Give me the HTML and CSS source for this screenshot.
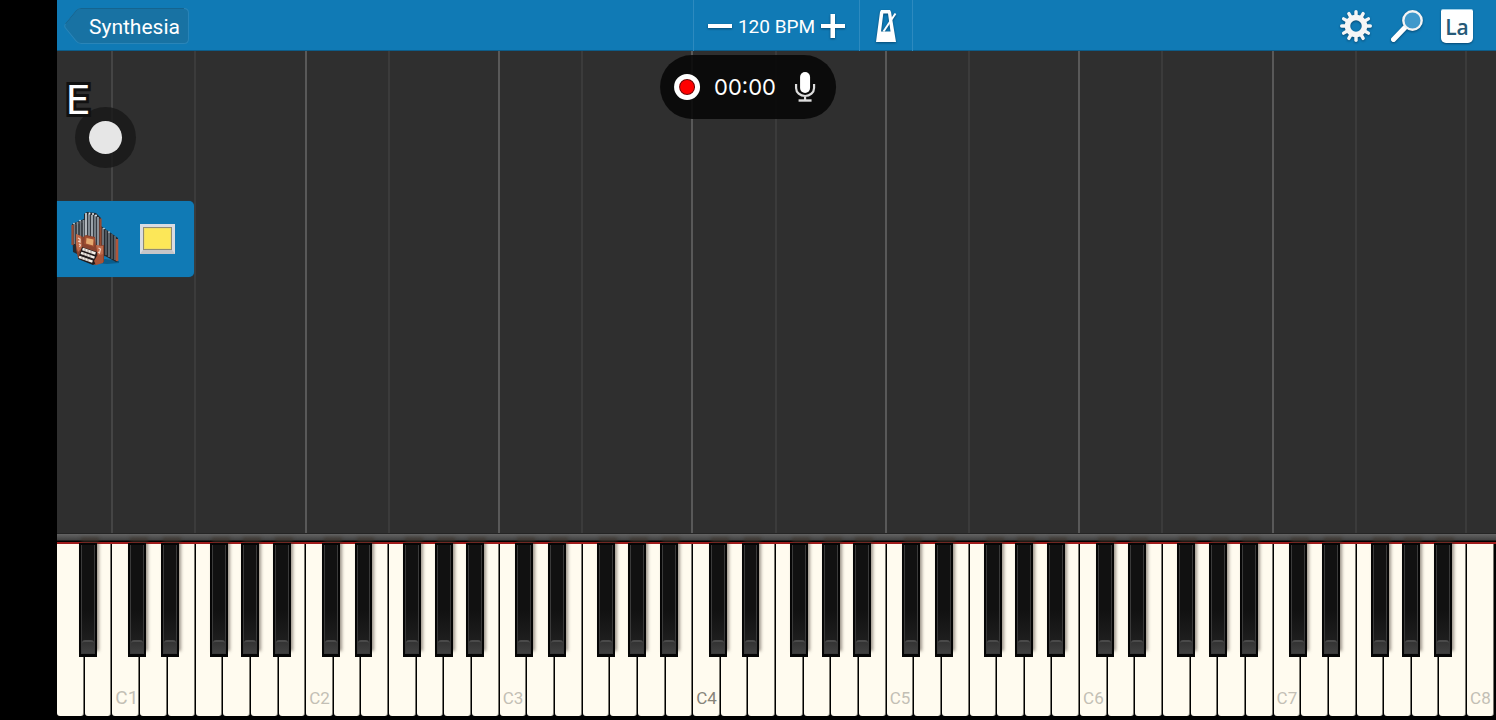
FILE: index.html
```html
<!DOCTYPE html>
<html lang="en">
<head>
<meta charset="utf-8">
<title>Synthesia</title>
<link rel="stylesheet" href="styles.css">
</head>
<body>
<main class="app">
  <header class="topbar">
    <div class="topbar-left">
      <button class="back" type="button">
        <svg class="back-shape" viewBox="0 0 124 36" preserveAspectRatio="none" aria-hidden="true">
          <path d="M17 .5H119Q123.500 .5 123.500 5V31Q123.500 35.500 119 35.500H17Q14 35.500 12 33L1.500 20Q0 18 1.500 16L12 3Q14 .5 17 .5Z" fill="#1872a3" stroke="#2a85b8"/>
          <path d="M1.500 16L12 3Q14 .5 17 .5H119" fill="none" stroke="#15648f"/>
        </svg>
        <span class="back-label">Synthesia</span>
      </button>
    </div>
    <div class="tempo">
      <button class="icon-btn" type="button" aria-label="Slower">
        <svg class="glyph" width="24" height="26" viewBox="0 0 24 26"><path d="M0 11h24v4H0z" fill="#fff"/></svg>
      </button>
      <output class="bpm">120 BPM</output>
      <button class="icon-btn" type="button" aria-label="Faster">
        <svg class="glyph" width="24" height="26" viewBox="0 0 24 26"><path d="M9.500 1h4.500v10H24v4H14v10H9.500V15H0v-4h9.500z" fill="#fff"/></svg>
      </button>
    </div>
    <div class="topbar-right">
      <button class="icon-btn metronome" type="button" aria-label="Metronome">
        <svg class="glyph" width="24" height="34" viewBox="0 0 24 34">
          <path fill="#fff" fill-rule="evenodd" d="M7 1h9l1 2 5 30H2L6 3zM9.300 4.500L7 22.500h9.500L14 4.500z"/>
          <path d="M9.500 22.500L21.500 4.500" stroke="#fff" stroke-width="2"/>
        </svg>
      </button>
      <div class="tools">
        <button class="icon-btn" type="button" aria-label="Settings">
          <svg class="glyph" width="34" height="34" viewBox="-17 -17 34 34">
            <circle r="8.500" fill="none" stroke="#f6f6f6" stroke-width="5.500"/>
            <g stroke="#f6f6f6" stroke-width="3.400" stroke-linecap="round">
              <path id="tooth" d="M0-10V-14.300"/>
              <use href="#tooth" transform="rotate(30)"/><use href="#tooth" transform="rotate(60)"/><use href="#tooth" transform="rotate(90)"/>
              <use href="#tooth" transform="rotate(120)"/><use href="#tooth" transform="rotate(150)"/><use href="#tooth" transform="rotate(180)"/>
              <use href="#tooth" transform="rotate(210)"/><use href="#tooth" transform="rotate(240)"/><use href="#tooth" transform="rotate(270)"/>
              <use href="#tooth" transform="rotate(300)"/><use href="#tooth" transform="rotate(330)"/>
            </g>
          </svg>
        </button>
        <button class="icon-btn" type="button" aria-label="Zoom">
          <svg class="glyph" width="34" height="34" viewBox="0 0 34 34">
            <path d="M3.500 30.500L15 18.500" stroke="#fff" stroke-width="5" stroke-linecap="round"/>
            <circle cx="22.500" cy="11.500" r="9.200" fill="#3f98cb" stroke="#f4f4f4" stroke-width="2.400"/>
          </svg>
        </button>
        <button class="labels-btn" type="button">La</button>
      </div>
    </div>
  </header>

  <section class="roll" aria-label="Note roll">
    <div class="lanes" id="lanes"></div>
    <div class="pedal"><span class="pedal-dot"></span></div>
    <div class="note-name">E</div>
    <div class="track">
      <button class="icon-btn" type="button" aria-label="Church organ">
        <svg width="60" height="68" viewBox="0 0 60 68">
          <path d="M30 58l10-4 14 2v2l-12 1z" fill="#0b5c8b"/>
          <path d="M7 19l12-5V9l3-2 9 1 5 5v8l17 12v23l-2 1-11-6-16 4-16-8z" fill="#252a30"/>
          <g stroke-width="1.800">
            <path d="M9.500 19v20" stroke="#737b82"/><path d="M12.500 17v20" stroke="#868e94"/><path d="M15.500 16v25" stroke="#737b82"/><path d="M18.500 15v25" stroke="#8b9298"/>
            <path d="M21 10v25" stroke="#c1c7cc"/><path d="M24 9v25" stroke="#8e969d"/><path d="M27 10v26" stroke="#a9b1b8"/><path d="M30 10v30" stroke="#7f888f"/><path d="M33 12v30" stroke="#969da5"/>
            <path d="M38 23v24" stroke="#737980"/><path d="M41 25v25" stroke="#565c63"/><path d="M44 27v25" stroke="#6a7077"/><path d="M47 29v25" stroke="#50565c"/><path d="M50 31v24" stroke="#60666d"/>
          </g>
          <path d="M22.500 10v23M25.500 9v24M28.500 9v28M31.500 10v31M11 20v20M14 19v20M17 18v20" stroke="#343a41"/>
          <g fill="#e4e7e9"><circle cx="21" cy="9" r="1"/><circle cx="24.500" cy="8.500" r="1"/><circle cx="28" cy="9" r="1"/><circle cx="31" cy="10.500" r="1"/><circle cx="9" cy="18.500" r=".8"/><circle cx="15" cy="15.500" r=".8"/><circle cx="39" cy="23.500" r=".8"/><circle cx="44" cy="27" r=".8"/></g>
          <path d="M7.500 20v20M35.500 13.500v27" stroke="#984b31" stroke-width="2.200"/>
          <path d="M52 34v22" stroke="#b0553a" stroke-width="2.600"/>
          <path d="M11 29l7 3 3-2 9 2 1 9 8-1v17l-9 3-17-7-2-9z" fill="#8a432e"/>
          <path d="M11 29l5 2 1 12-4 4-2-7zM31 40l7 1v9l-5 1z" fill="#bd6a4a"/>
          <path d="M20 31l10 2-1 9-10-3z" fill="#a24f31"/><path d="M21.500 33l7 1.500-.5 6-7-2z" fill="#e5aa70"/>
          <path d="M13 33l2 1v3l-2-1M14 39l1.500 1-1 2M33.500 43l2 1-1 4-1.500-1" fill="none" stroke="#f1d5c5" stroke-width="1.200"/>
          <path d="M17 42l15 5-1 11-3 2-15-6z" fill="#211a1b"/>
          <path d="M17.500 44l13 4.500M16 47.800l13.500 4.800M14 51.800l13.500 4.800" stroke="#f4efe8" stroke-width="2.400"/>
          <path d="M20 44v2M23 45v2M26 46v2M19 48v2M22 49v2M25 50v2M17 52v2M20 53v2M23 54v2" stroke="#6b5c59" stroke-width=".6"/>
          <path d="M29 56l3-5 6-2v9l-7 2z" fill="#a75439"/>
        </svg>
      </button>
      <button class="icon-btn" type="button" aria-label="Track colour"><span class="swatch"></span></button>
    </div>
  </section>

  <div class="rail"></div>
  <section class="keyboard" id="keyboard" aria-label="Piano"></section>
</main>

<aside class="recorder">
  <button class="icon-btn" type="button" aria-label="Record"><span class="record-dot"></span></button>
  <time class="clock">00:00</time>
  <button class="icon-btn" type="button" aria-label="Microphone">
    <svg width="22" height="32" viewBox="0 0 22 32">
      <rect x="6" y="1" width="10" height="21" rx="5" fill="#fff"/>
      <path d="M2 13v4a9 8 0 0 0 18 0v-4M11 25v4" fill="none" stroke="#ddd" stroke-width="2.200"/>
      <path d="M4.500 29.500h13" stroke="#ddd" stroke-width="2.400"/>
    </svg>
  </button>
</aside>
<script src="piano.js"></script>
</body>
</html>
```

FILE: styles.css
```css
* { box-sizing: border-box; }
body {
  margin: 0;
  background: #000;
  color: #fff;
  font-family: Roboto, "Liberation Sans", sans-serif;
}
button {
  padding: 0;
  border: 0;
  background: none;
  color: inherit;
  font: inherit;
}
svg { display: block; }
.app {
  display: flex;
  flex-direction: column;
  min-height: 100vh;
  padding: 0 0 4px 57px;
}
.icon-btn { display: block; flex: none; }
.glyph { filter: drop-shadow(0 1px 1px rgba(0, 40, 70, .6)); }

.topbar {
  display: grid;
  grid-template-columns: 1fr 167px 1fr;
  height: 51px;
  background: #107ab5;
  border-bottom: 1px solid #0d5c88;
}
.topbar-left { padding: 8px 7px; }
.back {
  position: relative;
  display: block;
  height: 36px;
  padding: 0 9px 0 25px;
  font-size: 21px;
  line-height: 38px;
}
.back-shape { position: absolute; inset: 0; width: 100%; height: 100%; }
.back-label { position: relative; }
.tempo {
  display: flex;
  align-items: center;
  justify-content: center;
  gap: 6px;
  border-left: 1px solid #2d8abf;
  border-right: 1px solid #2d8abf;
}
.bpm { font-size: 19px; line-height: 24px; padding-top: 2px; }
.topbar-right { display: flex; justify-content: space-between; }
.metronome {
  display: grid;
  place-items: center;
  width: 53px;
  border-right: 1px solid #2d8abf;
}
.tools { display: flex; align-items: center; gap: 17px; padding-right: 23px; }
.labels-btn {
  width: 32px;
  height: 34px;
  border-top: 1px solid #9fd0e8;
  border-radius: 2px 2px 5px 5px;
  background: #fff;
  color: #265a78;
  box-shadow: 0 1px 2px rgba(0, 40, 70, .6);
  font: 600 21px/32px "Open Sans", "Noto Sans", sans-serif;
}

.roll {
  position: relative;
  display: flex;
  flex: 1;
  flex-direction: column;
  background: #2f2f2f;
}
.lanes { display: flex; flex: 1; padding-right: 2px; }
.lane { flex-basis: 0; border-right: 2px solid #3b3b3b; }
.lane-octave { border-color: #595959; }
.lane-first { border-color: #454545; }
.lane:last-child { border: 0; }
.note-name {
  position: absolute;
  left: 9px;
  top: 25px;
  font-size: 41px;
  line-height: 48px;
  -webkit-text-stroke: 6px #111;
  stroke-linejoin: round;
  paint-order: stroke fill;
}
.pedal {
  position: absolute;
  left: 18px;
  top: 56px;
  display: grid;
  place-items: center;
  width: 61px;
  height: 61px;
  border-radius: 50%;
  background: rgba(24, 24, 24, .82);
}
.pedal-dot { width: 33px; height: 33px; border-radius: 50%; background: #e6e6e6; }
.track {
  position: absolute;
  left: 0;
  top: 150px;
  display: flex;
  align-items: center;
  gap: 15px;
  height: 76px;
  padding: 0 19px 0 8px;
  border-radius: 0 5px 5px 0;
  background: #107ab5;
  box-shadow: 0 0 1px #0d5c88;
}
.swatch {
  display: block;
  width: 35px;
  height: 30px;
  border: 3px solid #d9dce2;
  border-bottom-width: 4px;
  border-bottom-color: #c5c5c8;
  background: #fce758;
  box-shadow: inset 0 0 0 1px #8f8c74, inset 0 0 0 2px #f0dd65;
}

.rail {
  height: 11px;
  border-top: 1px solid #252525;
  border-bottom: 2px solid #a01c1c;
  background: linear-gradient(#646464, #414141 6px, #000 7px);
}
.keyboard { display: flex; height: 172px; padding-right: 1px; }
.slot { position: relative; display: flex; flex: 1 1 0; }
.white {
  display: flex;
  flex: 1;
  align-items: flex-end;
  margin-right: 1px;
  padding: 0 0 8px 3px;
  border-right: 1px solid #77756d;
  border-radius: 0 0 3px 3px;
  background: #fffbef;
  color: #c3bfb5;
  font-size: 17px;
  line-height: 20px;
}
.white-low { font-size: 19px; }
.white-middle { color: #87847a; }
.black {
  position: absolute;
  z-index: 1;
  top: -1px;
  left: 80%;
  width: 65%;
  height: 114px;
  padding: 2px 2px 3px;
  background: #050505;
  box-shadow: 2px -6px 3px rgba(60, 50, 40, .5);
}
.black-cs { left: 57%; }
.black-ds { left: 75%; }
.black-fs { left: 51%; }
.black-gs { left: 66%; }
.black-as { left: 80%; }
.black-top {
  display: flex;
  align-items: flex-end;
  height: 100%;
  border: 1px solid #3a3a3a;
  border-width: 0 1px 1px;
  background: linear-gradient(#111 60%, #232323);
}
.black-lip {
  flex: 1;
  height: 13px;
  border-top: 2px solid #4a4a4a;
  border-radius: 3px 3px 0 0;
  background: linear-gradient(#333, #404040);
}

.recorder {
  position: absolute;
  top: 55px;
  left: 50%;
  transform: translateX(-50%);
  display: flex;
  align-items: center;
  gap: 14px;
  height: 64px;
  padding: 0 20px 0 14px;
  border-radius: 32px;
  background: rgba(8, 8, 8, .9);
}
.record-dot {
  display: block;
  width: 26px;
  height: 26px;
  border: 5px solid #fff;
  border-radius: 50%;
  background: #f00;
  box-shadow: inset 0 0 0 1px #5a0d0d;
}
.clock { padding-right: 4px; font: 22px/28px Inter, "Noto Sans", sans-serif; }
```

FILE: piano.js
```js
const WHITE_KEYS = 52;
const NAMES = ["A", "B", "C", "D", "E", "F", "G"];
const SHARPS = { C: "cs", D: "ds", F: "fs", G: "gs", A: "as" };

function add(parent, tag, className) {
  const el = document.createElement(tag);
  el.className = className;
  parent.append(el);
  return el;
}

const keyboard = document.getElementById("keyboard");
for (let i = 0; i < WHITE_KEYS; i++) {
  const name = NAMES[i % 7];
  const octave = Math.floor((i + 5) / 7);
  const slot = add(keyboard, "div", "slot");
  const white = add(slot, "button", "white");
  white.type = "button";
  if (name === "C") {
    white.textContent = "C" + octave;
    if (octave === 1) white.classList.add("white-low");
    if (octave === 4) white.classList.add("white-middle");
  } else {
    white.setAttribute("aria-label", name + octave);
  }
  if (SHARPS[name] && i < WHITE_KEYS - 1) {
    const black = add(slot, "button", "black black-" + SHARPS[name]);
    black.type = "button";
    black.setAttribute("aria-label", name + " sharp " + octave);
    add(add(black, "span", "black-top"), "span", "black-lip");
  }
}

// Lanes span from each C to F and from each F to the next C.
const spans = [2];
for (let i = 0; i < 7; i++) spans.push(3, 4);
spans.push(1);
const lanes = document.getElementById("lanes");
spans.forEach((span, i) => {
  const kind = i === 0 ? " lane-first" : i % 2 === 0 && i < 14 ? " lane-octave" : "";
  add(lanes, "div", "lane" + kind).style.flexGrow = span;
});
```
